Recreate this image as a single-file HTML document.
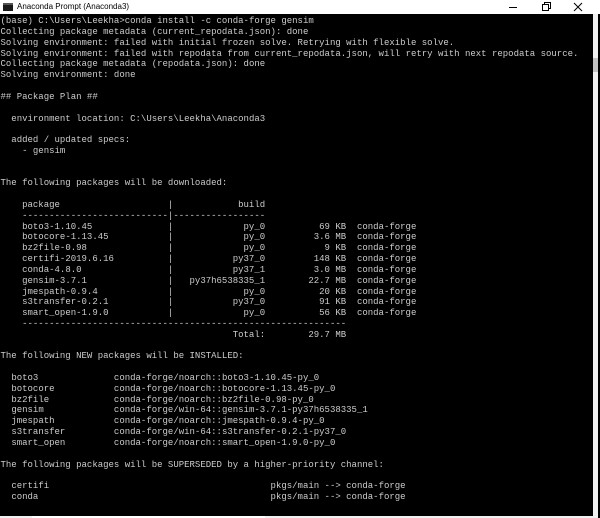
<!DOCTYPE html>
<html><head><meta charset="utf-8"><style>
*{margin:0;padding:0;box-sizing:border-box}
html,body{width:600px;height:518px;overflow:hidden;background:#000}
#title{position:absolute;left:0;top:0;width:600px;height:14px;background:#fff;font:8px "Liberation Sans",sans-serif;color:#000}
#title .ic{position:absolute;left:3px;top:3px;width:10px;height:8px;background:#1a1a1a;border-top:2px solid #555}
#title .t{position:absolute;left:17px;top:2px}
#term{position:absolute;left:0.5px;top:16.2px;font:9px/10.82px "Liberation Mono",monospace;color:#cccccc;white-space:pre}
.c{display:inline-block;overflow:visible}
.r{text-align:right}
#vs{position:absolute;left:593px;top:14px;width:5px;height:502px;background:#f0f0f0}
#vt{position:absolute;left:593px;top:58px;width:5px;height:14px;background:#c2c2c2}
#hs{position:absolute;left:0;top:516px;width:598px;height:2px;background:#f0f0f0}
#ht{position:absolute;left:32px;top:516px;width:233px;height:2px;background:#fff}
</style></head><body>
<div id="title"><div class="ic"></div><div class="t">Anaconda Prompt (Anaconda3)</div>
<svg style="position:absolute;left:0;top:0" width="600" height="14">
<line x1="509" y1="7.5" x2="517" y2="7.5" stroke="#000" stroke-width="1"/>
<rect x="542.5" y="4.5" width="6" height="6" fill="none" stroke="#000"/>
<path d="M544.5 4.5V2.5H550.5V8.5H548.5" fill="none" stroke="#000"/>
<path d="M574 3L582 11M582 3L574 11" stroke="#000" stroke-width="1"/>
</svg></div>
<div id="term">(base) C:\Users\Leekha&gt;conda install -c conda-forge gensim
Collecting package metadata (current_repodata.json): done
Solving environment: failed with initial frozen solve. Retrying with flexible solve.
Solving environment: failed with repodata from current_repodata.json, will retry with next repodata source.
Collecting package metadata (repodata.json): done
Solving environment: done

## Package Plan ##

  environment location: C:\Users\Leekha\Anaconda3

  added / updated specs:
    - gensim


The following packages will be downloaded:

    <span class="c" style="width:27ch">package</span>|<span class="c r" style="width:17ch">build</span>
    ---------------------------|-----------------
    <span class="c" style="width:27ch">boto3-1.10.45</span>|<span class="c r" style="width:17ch">py_0</span><span class="c r" style="width:15ch">69 KB</span>  conda-forge
    <span class="c" style="width:27ch">botocore-1.13.45</span>|<span class="c r" style="width:17ch">py_0</span><span class="c r" style="width:15ch">3.6 MB</span>  conda-forge
    <span class="c" style="width:27ch">bz2file-0.98</span>|<span class="c r" style="width:17ch">py_0</span><span class="c r" style="width:15ch">9 KB</span>  conda-forge
    <span class="c" style="width:27ch">certifi-2019.6.16</span>|<span class="c r" style="width:17ch">py37_0</span><span class="c r" style="width:15ch">148 KB</span>  conda-forge
    <span class="c" style="width:27ch">conda-4.8.0</span>|<span class="c r" style="width:17ch">py37_1</span><span class="c r" style="width:15ch">3.0 MB</span>  conda-forge
    <span class="c" style="width:27ch">gensim-3.7.1</span>|<span class="c r" style="width:17ch">py37h6538335_1</span><span class="c r" style="width:15ch">22.7 MB</span>  conda-forge
    <span class="c" style="width:27ch">jmespath-0.9.4</span>|<span class="c r" style="width:17ch">py_0</span><span class="c r" style="width:15ch">20 KB</span>  conda-forge
    <span class="c" style="width:27ch">s3transfer-0.2.1</span>|<span class="c r" style="width:17ch">py37_0</span><span class="c r" style="width:15ch">91 KB</span>  conda-forge
    <span class="c" style="width:27ch">smart_open-1.9.0</span>|<span class="c r" style="width:17ch">py_0</span><span class="c r" style="width:15ch">56 KB</span>  conda-forge
    ------------------------------------------------------------
<span class="c r" style="width:49ch">Total:</span><span class="c r" style="width:15ch">29.7 MB</span>

The following NEW packages will be INSTALLED:

  <span class="c" style="width:19ch">boto3</span>conda-forge/noarch::boto3-1.10.45-py_0
  <span class="c" style="width:19ch">botocore</span>conda-forge/noarch::botocore-1.13.45-py_0
  <span class="c" style="width:19ch">bz2file</span>conda-forge/noarch::bz2file-0.98-py_0
  <span class="c" style="width:19ch">gensim</span>conda-forge/win-64::gensim-3.7.1-py37h6538335_1
  <span class="c" style="width:19ch">jmespath</span>conda-forge/noarch::jmespath-0.9.4-py_0
  <span class="c" style="width:19ch">s3transfer</span>conda-forge/win-64::s3transfer-0.2.1-py37_0
  <span class="c" style="width:19ch">smart_open</span>conda-forge/noarch::smart_open-1.9.0-py_0

The following packages will be SUPERSEDED by a higher-priority channel:

  <span class="c" style="width:48ch">certifi</span>pkgs/main --&gt; conda-forge
  <span class="c" style="width:48ch">conda</span>pkgs/main --&gt; conda-forge
</div>
<div id="vs"></div><div id="vt"></div><div id="hs"></div><div id="ht"></div>
</body></html>
